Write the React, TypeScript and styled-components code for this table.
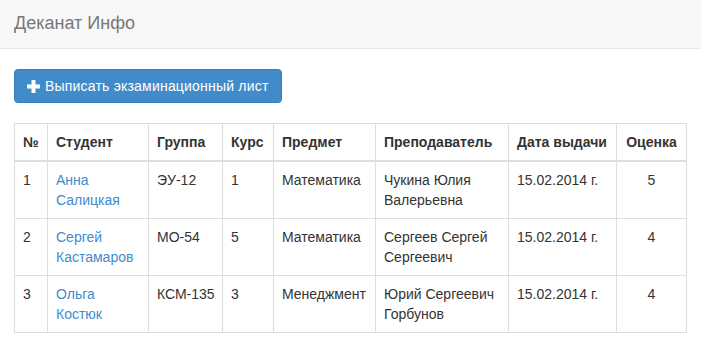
import React from "react";
import styled, { createGlobalStyle } from "styled-components";

const Global = createGlobalStyle`
  html, body { margin: 0; padding: 0; background: #fff; }
  body {
    font-family: "Liberation Sans", Arial, Helvetica, sans-serif;
    font-size: 14px;
    line-height: 20px;
    color: #333;
  }
  * { box-sizing: border-box; }
`;

const Navbar = styled.div`
  height: 49px;
  background: #f8f8f8;
  border-bottom: 1px solid #e7e7e7;
  display: flex;
  align-items: center;
  padding: 0 14px;
`;

const Brand = styled.a`
  font-size: 18px;
  line-height: 20px;
  color: #777;
  text-decoration: none;
  margin-top: -3px;
`;

const Container = styled.div`
  padding: 20px 15px 0 14px;
`;

const Button = styled.button`
  display: inline-flex;
  align-items: center;
  gap: 5px;
  height: 34px;
  padding: 6px 12px;
  font-family: inherit;
  font-size: 14px;
  line-height: 20px;
  letter-spacing: 0.2px;
  color: #fff;
  background: #428bca;
  border: 1px solid #357ebd;
  border-radius: 4px;
  cursor: pointer;
`;

const Table = styled.table`
  margin-top: 20px;
  width: 672px;
  border-collapse: collapse;
  table-layout: fixed;
`;

const Th = styled.th<{ $w: number; $center?: boolean }>`
  width: ${(p) => p.$w}px;
  padding: 8px;
  text-align: ${(p) => (p.$center ? "center" : "left")};
  vertical-align: bottom;
  font-weight: bold;
  border: 1px solid #ddd;
  border-bottom: 2px solid #ddd;
  white-space: nowrap;
`;

const Td = styled.td<{ $center?: boolean }>`
  padding: 8px;
  vertical-align: top;
  text-align: ${(p) => (p.$center ? "center" : "left")};
  border: 1px solid #ddd;
`;

const Link = styled.a`
  color: #428bca;
  text-decoration: none;
`;

const PlusIcon = () => (
  <svg width="13" height="13" viewBox="0 0 13 13" aria-hidden="true">
    <path d="M4.5 0h4v4.5H13v4H8.5V13h-4V8.5H0v-4h4.5z" fill="#fff" />
  </svg>
);

const cols: { title: string; w: number; center?: boolean }[] = [
  { title: "№", w: 33 },
  { title: "Студент", w: 101 },
  { title: "Группа", w: 74 },
  { title: "Курс", w: 51 },
  { title: "Предмет", w: 102 },
  { title: "Преподаватель", w: 133 },
  { title: "Дата выдачи", w: 108 },
  { title: "Оценка", w: 70, center: true },
];

const rows = [
  ["1", "Анна Салицкая", "ЭУ-12", "1", "Математика", "Чукина Юлия Валерьевна", "15.02.2014 г.", "5"],
  ["2", "Сергей Кастамаров", "МО-54", "5", "Математика", "Сергеев Сергей Сергеевич", "15.02.2014 г.", "4"],
  ["3", "Ольга Костюк", "КСМ-135", "3", "Менеджмент", "Юрий Сергеевич Горбунов", "15.02.2014 г.", "4"],
];

export default function App() {
  return (
    <>
      <Global />
      <Navbar>
        <Brand href="#">Деканат Инфо</Brand>
      </Navbar>
      <Container>
        <Button>
          <PlusIcon />
          Выписать экзаминационный лист
        </Button>
        <Table>
          <thead>
            <tr>
              {cols.map((c) => (
                <Th key={c.title} $w={c.w} $center={c.center}>
                  {c.title}
                </Th>
              ))}
            </tr>
          </thead>
          <tbody>
            {rows.map((r) => (
              <tr key={r[0]}>
                {r.map((v, i) => (
                  <Td key={i} $center={i === 7}>
                    {i === 1 ? <Link href="#">{v}</Link> : v}
                  </Td>
                ))}
              </tr>
            ))}
          </tbody>
        </Table>
      </Container>
    </>
  );
}
